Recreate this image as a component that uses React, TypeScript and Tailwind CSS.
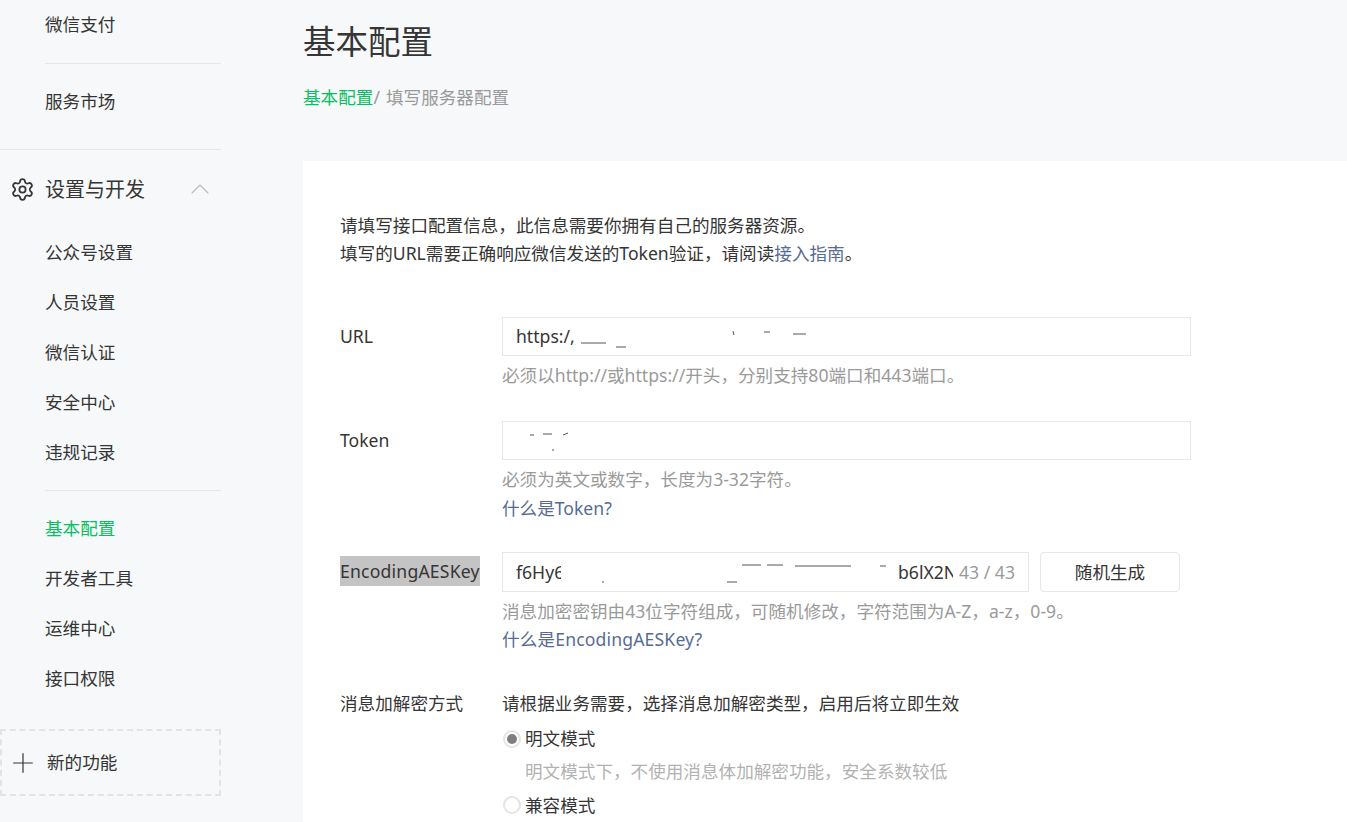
import { Settings, ChevronUp, Plus } from "lucide-react";

const font = "font-['Noto_Sans','Noto_Sans_CJK_SC',sans-serif]";

function NavItem({ label, active }: { label: string; active?: boolean }) {
    return (
        <div className={`flex h-[50px] items-center pb-[2px] pl-[45px] text-[17.6px] ${active ? "text-[#07c160]" : "text-[#353535]"}`}>
            {label}
        </div>
    );
}

function Specks({ width, marks }: { width: number; marks: number[][] }) {
    // leftovers of the text that was painted out in the screenshot
    return (
        <svg width={width} height="24" className="shrink-0 text-[#555]" fill="none" stroke="currentColor" strokeWidth="1">
            {marks.map(([x1, y1, x2, y2], i) => (
                <line key={i} x1={x1} y1={y1} x2={x2} y2={y2} />
            ))}
        </svg>
    );
}

function Row({ label, children, className }: { label: React.ReactNode; children: React.ReactNode; className?: string }) {
    return (
        <div className={`flex ${className ?? ""}`}>
            <div className="w-[199px] shrink-0 whitespace-nowrap pl-[37px] text-[17.6px] leading-[39px] text-[#353535]">{label}</div>
            <div className="min-w-0 flex-1">{children}</div>
        </div>
    );
}

export default function App() {
    return (
        <div className={`flex h-[822px] w-full overflow-hidden bg-[#f6f8f9] ${font}`}>
            <aside className="w-[303px] shrink-0">
                <div className="w-[221px]">
                    <NavItem label="微信支付" />
                    <div className="ml-[45px] mt-[13px] border-t border-[#e4e6e9]" />
                    <div className="mt-[13px]">
                        <NavItem label="服务市场" />
                    </div>
                    <div className="mt-[22px] border-t border-[#e4e6e9]" />
                    <div className="mt-[14px] flex h-[50px] items-center text-[20px] text-[#353535]">
                        <Settings className="ml-[10px] h-[25px] w-[25px]" strokeWidth={1.7} />
                        <span className="ml-[10px] pt-px">设置与开发</span>
                        <ChevronUp className="ml-auto mr-[5px] h-[32px] w-[32px] text-[#b9bbbe]" strokeWidth={0.8} />
                    </div>
                    <div className="mt-[14px]">
                        <NavItem label="公众号设置" />
                        <NavItem label="人员设置" />
                        <NavItem label="微信认证" />
                        <NavItem label="安全中心" />
                        <NavItem label="违规记录" />
                    </div>
                    <div className="ml-[45px] mt-[12px] border-t border-[#e4e6e9]" />
                    <div className="mt-[13px]">
                        <NavItem label="基本配置" active />
                        <NavItem label="开发者工具" />
                        <NavItem label="运维中心" />
                        <NavItem label="接口权限" />
                    </div>
                    <div className="mt-[25px] flex h-[67px] items-center border-2 border-dashed border-[#e2e3e6] text-[#353535]">
                        <Plus className="ml-[5px] h-[32px] w-[32px]" strokeWidth={0.9} />
                        <span className="ml-[8px] text-[17.6px]">新的功能</span>
                    </div>
                </div>
            </aside>

            <main className="min-w-0 flex-1">
                <h1 className="pt-[18px] text-[32.5px] font-normal leading-[48px] text-[#353535]">基本配置</h1>
                <div className="mt-[19px] flex text-[17.6px] leading-[24px]">
                    <span className="text-[#07c160]">基本配置</span>
                    <span className="text-[#9a9a9a]">/</span>
                    <span className="ml-[6px] text-[#9a9a9a]">填写服务器配置</span>
                </div>

                <section className="mt-[52px] h-[700px] bg-white pt-[50px] text-[17.6px]">
                    <div className="pl-[37px] leading-[28px] text-[#353535]">
                        <p>请填写接口配置信息，此信息需要你拥有自己的服务器资源。</p>
                        <p>
                            填写的URL需要正确响应微信发送的Token验证，请阅读<span className="text-[#576b95]">接入指南</span>。
                        </p>
                    </div>

                    <Row label="URL" className="mt-[50px]">
                        <div className="flex h-[39px] w-[689px] items-center border border-[#e7e7e7] pl-[13px] text-[#353535]">
                            <span>https:/,</span>
                            <Specks width={610} marks={[[6, 18, 31, 18], [41, 22, 51, 22], [158, 6, 159, 10], [189, 7, 195, 7], [218, 9, 231, 9]]} />
                        </div>
                        <p className="mt-[5px] leading-[28px] text-[#9a9a9a]">必须以http://或https://开头，分别支持80端口和443端口。</p>
                    </Row>

                    <Row label="Token" className="mt-[32px]">
                        <div className="flex h-[39px] w-[689px] items-center border border-[#e7e7e7] pl-[13px]">
                            <Specks width={120} marks={[[14, 6, 18, 6], [27, 5, 36, 5], [47, 6, 52, 4], [36, 21, 38, 21]]} />
                        </div>
                        <p className="mt-[5px] leading-[28px] text-[#9a9a9a]">必须为英文或数字，长度为3-32字符。</p>
                        <p className="mt-px leading-[28px] text-[#576b95]">什么是Token?</p>
                    </Row>

                    <Row label={<span className="bg-[#c4c4c4] py-[3px] tracking-[0.2px]">EncodingAESKey</span>} className="mt-[30px]">
                        <div className="flex items-center">
                            <div className="flex h-[40px] w-[527px] items-center border border-[#e7e7e7] pl-[13px] text-[#353535]">
                                <span className="w-[45px] shrink-0 overflow-hidden whitespace-nowrap">f6Hy6</span>
                                <Specks width={337} marks={[[41, 22, 43, 22], [166, 22, 176, 22], [181, 5, 200, 5], [206, 5, 222, 5], [234, 6, 290, 6], [319, 6, 325, 6]]} />
                                <span className="w-[55px] shrink-0 overflow-hidden whitespace-nowrap">b6lX2N</span>
                                <span className="ml-[6px] whitespace-nowrap text-[#9a9a9a]">43 / 43</span>
                            </div>
                            <button className="ml-[11px] h-[40px] w-[140px] rounded-[4px] border border-[#e7e7e7] text-[#353535]">随机生成</button>
                        </div>
                        <p className="mt-[5px] leading-[28px] text-[#9a9a9a]">消息加密密钥由43位字符组成，可随机修改，字符范围为A-Z，a-z，0-9。</p>
                        <p className="leading-[28px] tracking-[0.15px] text-[#576b95]">什么是EncodingAESKey?</p>
                    </Row>

                    <Row label="消息加解密方式" className="mt-[31px]">
                        <p className="leading-[39px] text-[#353535]">请根据业务需要，选择消息加解密类型，启用后将立即生效</p>
                        <label className="flex h-[32px] items-center text-[#353535]">
                            <span className="ml-px flex h-[18px] w-[18px] items-center justify-center rounded-full border-2 border-[#e4e4e4]">
                                <span className="h-[10px] w-[10px] rounded-full bg-[#7f7f7f]" />
                            </span>
                            <span className="ml-[4px] pb-[2px]">明文模式</span>
                        </label>
                        <p className="ml-[23px] mt-[2px] leading-[28px] text-[#b2b2b2]">明文模式下，不使用消息体加解密功能，安全系数较低</p>
                        <label className="mt-[4px] flex h-[32px] items-center text-[#353535]">
                            <span className="ml-px h-[18px] w-[18px] rounded-full border-2 border-[#e4e4e4]" />
                            <span className="ml-[4px]">兼容模式</span>
                        </label>
                    </Row>
                </section>
            </main>
        </div>
    );
}
